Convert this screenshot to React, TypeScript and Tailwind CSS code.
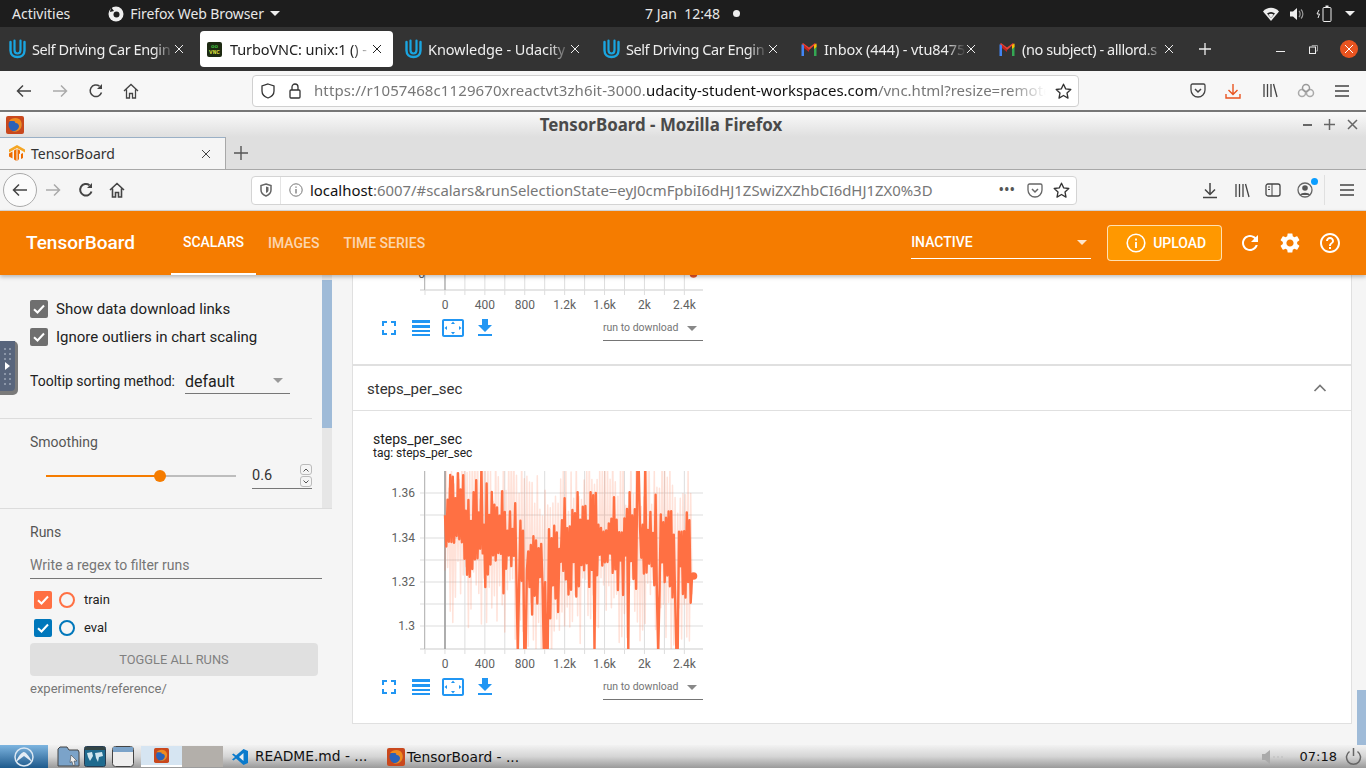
import React from 'react';

const UBUNTU = "font-['Noto_Sans','Liberation_Sans',sans-serif]";

function UdacityIcon() {
  return (
    <svg width="17" height="20" viewBox="0 0 17 20" className="shrink-0">
      <path d="M1.5 3v8.5c0 4 3 6.5 7 6.5s7-2.5 7-6.5V3" fill="none" stroke="#1aa5e0" strokeWidth="2.4" strokeLinecap="round" />
      <path d="M5.5 1.5v9.5c0 2 1.2 3.5 3 3.5s3-1.5 3-3.5V1.5" fill="none" stroke="#1aa5e0" strokeWidth="2.2" strokeLinecap="round" />
    </svg>
  );
}

function GmailIcon() {
  return (
    <svg width="16" height="13" viewBox="0 0 16 13" className="shrink-0">
      <path d="M0.5 13V1.5L3 1v12z" fill="#4285f4" />
      <path d="M13 13V1l2.5.5V13z" fill="#34a853" />
      <path d="M1 1l7 6 7-6-1-1-6 4.5L2 0z" fill="#ea4335" />
      <path d="M13 2l2.5-1.5V4L13 6z" fill="#fbbc04" />
      <path d="M3 2L8 6.5V9L3 5z" fill="#c5221f" />
    </svg>
  );
}

function VncIcon() {
  return (
    <div className="w-[15px] h-[15px] shrink-0 bg-[#1d2a12] rounded-[2px] flex flex-col justify-end pb-[1px] font-['Liberation_Mono',monospace] font-bold text-[6px] leading-[6px] text-center text-[#d8df3a]">
      <span className="text-[#3fbf3f]">oo</span>
      <span>VNC</span>
    </div>
  );
}

function FirefoxIcon({ size = 18 }: { size?: number }) {
  return (
    <svg width={size} height={size} viewBox="0 0 18 18" className="shrink-0">
      <rect x="0" y="0" width="18" height="18" rx="2" fill="#c9481d" />
      <circle cx="9" cy="9" r="6.5" fill="#2a62b8" />
      <path d="M3 5c2-3 7-4 10-2 3 2 3.5 6 2 9-2 3.5-6 4.5-9 3 4 .5 7-2 7-5 0-2-2-3.5-4-3 1-1 0-2-2-2-1.500 0-3 .2-4 0z" fill="#f08a1d" />
    </svg>
  );
}

function TabClose({ className = '' }: { className?: string }) {
  return (
    <svg width="10" height="10" viewBox="0 0 10 10" className={`shrink-0 ${className}`}>
      <path d="M1 1l8 8M9 1l-8 8" stroke="currentColor" strokeWidth="1" />
    </svg>
  );
}

function OuterTab({ icon, title, active, tight }: { icon: React.ReactNode; title: string; active?: boolean; tight?: boolean }) {
  return (
    <div className={`w-[193px] h-[36px] mr-[5px] shrink-0 rounded-[4px] flex items-center pl-[7px] pr-[11px] ${active ? 'bg-white text-[#222]' : 'text-[#eee]'}`}>
      <div className="w-[23px] shrink-0">{icon}</div>
      <span className={`w-[142px] pt-[1px] whitespace-nowrap text-[14.5px] [mask-image:linear-gradient(to_right,black_86%,transparent)] ${tight ? 'tracking-[-0.42px]' : 'tracking-[-0.1px]'}`}>{title}</span>
      <div className="ml-auto"><TabClose /></div>
    </div>
  );
}

function TopBar() {
  return (
    <div className="h-[27px] bg-[#1d1d1d] text-[#e8e8e8] text-[14px] flex items-center relative">
      <span className="ml-[12px]">Activities</span>
      <svg width="16" height="16" viewBox="0 0 16 16" className="ml-[38px]">
        <circle cx="8" cy="8" r="7.500" fill="#eee" />
        <circle cx="8.500" cy="8.500" r="3" fill="#1d1d1d" />
        <path d="M3 1l3 4-4 1z" fill="#1d1d1d" />
      </svg>
      <span className="ml-[6px] tracking-[-0.1px]">Firefox Web Browser</span>
      <span className="ml-[6px] w-0 h-0 border-x-[5px] border-x-transparent border-t-[5px] border-t-[#eee]" />
      <div className="absolute left-[645px] top-0 h-[27px] flex items-center">
        <span>7 Jan&nbsp; 12:48</span>
        <span className="ml-[13px] w-[7px] h-[7px] rounded-full bg-[#eee]" />
      </div>
      <div className="ml-auto mr-[11px] flex items-center">
        <svg width="16" height="14" viewBox="0 0 16 14"><path d="M0 4.500C4-.5 12-.5 16 4.500L8 14z" fill="#eee" /><path d="M4 6.500c2.500-2 5.500-2 8 0L8 11z" fill="#1d1d1d" /><path d="M5.500 7.500c1.500-1 3.500-1 5 0L8 11z" fill="#eee" /></svg>
        <svg width="14" height="14" viewBox="0 0 14 14" className="ml-[11px]"><path d="M0 4.500h3L7 1v12L3 9.500H0z" fill="#eee" /><path d="M9 4c1.500 1.500 1.500 4.500 0 6M11 2.500c2.500 2.500 2.500 6.500 0 9" fill="none" stroke="#999" strokeWidth="1.200" /></svg>
        <svg width="16" height="17" viewBox="0 0 16 17" className="ml-[12px]"><rect x="7" y="2.500" width="8" height="14" rx="1" fill="none" stroke="#eee" /><rect x="9.500" y="0.500" width="3" height="2" fill="#eee" /><path d="M3 5L1 9h2.500L2 13" fill="none" stroke="#eee" /></svg>
        <span className="ml-[13px] w-0 h-0 border-x-[5px] border-x-transparent border-t-[5px] border-t-[#eee]" />
      </div>
    </div>
  );
}

function OuterTabs() {
  return (
    <div className="h-[44px] bg-[#333333] flex items-start pt-[4px] pl-[2px]">
      <OuterTab icon={<UdacityIcon />} title="Self Driving Car Engin" tight />
      <OuterTab icon={<VncIcon />} title="TurboVNC: unix:1 () -" active />
      <OuterTab icon={<UdacityIcon />} title="Knowledge - Udacity" />
      <OuterTab icon={<UdacityIcon />} title="Self Driving Car Engin" tight />
      <OuterTab icon={<GmailIcon />} title="Inbox (444) - vtu8475" />
      <OuterTab icon={<GmailIcon />} title="(no subject) - alllord.s" tight />
      <svg width="14" height="14" viewBox="0 0 14 14" className="ml-[8px] mt-[11px]"><path d="M7 1v12M1 7h12" stroke="#eee" strokeWidth="1.300" /></svg>
      <div className="ml-auto flex items-center h-[36px] mr-[8px]">
        <span className="w-[9px] h-[1.500px] bg-[#eee] mt-[5px]" />
        <svg width="9" height="9" viewBox="0 0 9 9" className="ml-[24px]"><rect x="0.500" y="2" width="6" height="6.500" fill="none" stroke="#eee" /><path d="M3 2V.500h5.500V6H7" fill="none" stroke="#999" /></svg>
        <div className="ml-[22px] w-[18px] h-[18px] rounded-full bg-[#e95420] flex items-center justify-center text-white"><TabClose /></div>
      </div>
    </div>
  );
}

function ArrowIcon({ color, left }: { color: string; left?: boolean }) {
  return (
    <svg width="16" height="14" viewBox="0 0 16 14">
      <path d={left ? 'M15 7H1.500M7 1.500L1.500 7 7 12.500' : 'M1 7h13.500M9 1.500L14.500 7 9 12.500'} fill="none" stroke={color} strokeWidth="1.500" />
    </svg>
  );
}

function ReloadIcon({ color = '#444', width = 1.5 }: { color?: string; width?: number }) {
  return (
    <svg width="16" height="16" viewBox="0 0 16 16">
      <path d="M13.500 9.500A5.800 5.800 0 1 1 11.500 3.200" fill="none" stroke={color} strokeWidth={width} />
      <path d="M14 1v5h-5z" fill={color} />
    </svg>
  );
}

function HomeIcon({ width = 1.3 }: { width?: number }) {
  return (
    <svg width="16" height="16" viewBox="0 0 16 16">
      <path d="M1 8l7-6.500L15 8M3.500 6.500V15h3v-4.500h3V15h3V6.500" fill="none" stroke="#444" strokeWidth={width} />
    </svg>
  );
}

function StarIcon() {
  return (
    <svg width="17" height="16" viewBox="0 0 17 16">
      <path d="M8.500 1.200l2.200 4.700 5.100.6-3.800 3.500 1 5.100-4.500-2.600L4 15.100l1-5.100-3.800-3.500 5.100-.6z" fill="none" stroke="#333" strokeWidth="1.300" strokeLinejoin="round" />
    </svg>
  );
}

function PocketIcon({ color = '#444' }: { color?: string }) {
  return (
    <svg width="16" height="15" viewBox="0 0 16 15">
      <path d="M1 2.500a1.500 1.500 0 0 1 1.500-1.500h11A1.500 1.500 0 0 1 15 2.500V7a7 7 0 0 1-14 0z" fill="none" stroke={color} strokeWidth="1.300" />
      <path d="M5 6l3 3 3-3" fill="none" stroke={color} strokeWidth="1.500" />
    </svg>
  );
}

function LibraryIcon() {
  return (
    <svg width="16" height="15" viewBox="0 0 16 15">
      <path d="M2 1v13M5.500 1v13M9 1v13M11.500 1l3.500 13" fill="none" stroke="#444" strokeWidth="1.300" />
    </svg>
  );
}

function MenuIcon() {
  return (
    <svg width="14" height="12" viewBox="0 0 14 12">
      <path d="M0 1h14M0 6h14M0 11h14" stroke="#444" strokeWidth="1.400" />
    </svg>
  );
}

function OuterNav() {
  return (
    <div className="h-[39px] bg-[#f7f7f7] flex items-center relative">
      <div className="ml-[16px]"><ArrowIcon color="#444" left /></div>
      <div className="ml-[20px]"><ArrowIcon color="#aaa" /></div>
      <div className="ml-[20px]"><ReloadIcon /></div>
      <div className="ml-[19px]"><HomeIcon /></div>
      <div className="ml-[113px] w-[827px] h-[32px] bg-white border border-[#d0d0d0] rounded-[4px] flex items-center">
        <svg width="14" height="16" viewBox="0 0 14 16" className="ml-[8px]"><path d="M7 1l6 2v5c0 3.500-3 6-6 7-3-1-6-3.500-6-7V3z" fill="none" stroke="#333" strokeWidth="1.300" /></svg>
        <svg width="12" height="16" viewBox="0 0 12 16" className="ml-[14px]"><rect x="1" y="7" width="10" height="8" rx="1" fill="none" stroke="#333" strokeWidth="1.300" /><path d="M3 7V4a3 3 0 0 1 6 0v3" fill="none" stroke="#333" strokeWidth="1.300" /></svg>
        <div className="ml-[13px] w-[732px] whitespace-nowrap text-[15px] [mask-image:linear-gradient(to_right,black_95%,transparent)]">
          <span className="text-[#777] tracking-[0.1px]">https://r1057468c1129670xreactvt3zh6it-3000.</span>
          <span className="text-[#111]">udacity-student-workspaces.com</span>
          <span className="text-[#777]">/vnc.html?resize=remote</span>
        </div>
        <div className="ml-[9px]"><StarIcon /></div>
      </div>
      <div className="ml-[111px]"><PocketIcon /></div>
      <svg width="16" height="16" viewBox="0 0 16 16" className="ml-[19px]"><path d="M8 1v10M3.500 7L8 11.500 12.500 7M1 11v4h14v-4" fill="none" stroke="#e95420" strokeWidth="1.400" /></svg>
      <div className="ml-[21px]"><LibraryIcon /></div>
      <svg width="18" height="16" viewBox="0 0 18 16" className="ml-[19px]"><circle cx="5" cy="10" r="3.500" fill="none" stroke="#aaa" strokeWidth="1.500" /><circle cx="13" cy="10" r="3.500" fill="none" stroke="#aaa" strokeWidth="1.500" /><circle cx="9" cy="5" r="3.500" fill="none" stroke="#999" strokeWidth="1.500" /></svg>
      <div className="ml-[20px]"><MenuIcon /></div>
    </div>
  );
}

function VncTitle() {
  return (
    <div className="h-[27px] border-t-2 border-[#777] bg-gradient-to-b from-[#fafafa] to-[#dfdfdf] relative flex items-center justify-center">
      <div className="absolute left-[6px] top-[4px]"><FirefoxIcon /></div>
      <span className="font-bold text-[16.900px] text-[#4a4a4a] ml-[-44px]">TensorBoard - Mozilla Firefox</span>
      <div className="absolute right-[8px] top-0 h-full flex items-center gap-[12px] text-[#555]">
        <span className="w-[9px] h-[2px] bg-[#666]" />
        <svg width="11" height="11" viewBox="0 0 11 11"><path d="M5.500 0v11M0 5.500h11" stroke="#666" strokeWidth="1.500" /></svg>
        <svg width="11" height="11" viewBox="0 0 11 11"><path d="M1 1l9 9M10 1l-9 9" stroke="#666" strokeWidth="1.500" /></svg>
      </div>
    </div>
  );
}

function InnerTabs() {
  return (
    <div className="h-[33px] bg-[#dfdfdf] border-b border-[#a8a8a8] flex items-end">
      <div className="w-[226px] h-[33px] bg-[#f5f5f5] border-t-2 border-t-[#9ab0c6] border-r border-r-[#a8a8a8] flex items-center pl-[9px] pr-[14px]">
        <svg width="16" height="17" viewBox="0 0 16 17">
          <path d="M8 0l8 4.500v3L8 3 0 7.500v-3z" fill="#f5a623" />
          <path d="M0 8.500l3.500-2v7L0 11.500zM5 5.500l2.500-1.500v12L5 14.500zM8.500 4l2.500 1.500v3l-1 .5v5L8.500 16zM12 9l2-1v5l-2 1z" fill="#ef6c00" />
        </svg>
        <span className="ml-[6px] text-[14px] text-[#333]">TensorBoard</span>
        <div className="ml-auto text-[#444]"><TabClose /></div>
      </div>
      <svg width="14" height="14" viewBox="0 0 14 14" className="ml-[8px] mb-[9px]"><path d="M7 0v14M0 7h14" stroke="#555" strokeWidth="1.400" /></svg>
    </div>
  );
}

function InnerNav() {
  return (
    <div className="h-[41px] bg-[#f5f5f5] border-b border-[#d8d8d8] flex items-center">
      <div className="ml-[3px] w-[34px] h-[34px] rounded-full border border-[#aaa] bg-[#fbfbfb] flex items-center justify-center"><ArrowIcon color="#444" left /></div>
      <div className="ml-[8px]"><ArrowIcon color="#aaa" /></div>
      <div className="ml-[17px]"><ReloadIcon width={2} /></div>
      <div className="ml-[15px]"><HomeIcon width={1.600} /></div>
      <div className="ml-[126px] w-[826px] h-[29px] bg-white border border-[#d4d4d4] rounded-[4px] flex items-center">
        <svg width="12" height="14" viewBox="0 0 12 14" className="ml-[8px] shrink-0"><path d="M6 1l5 1.500V7c0 3-2.500 5-5 6-2.500-1-5-3-5-6V2.500z" fill="none" stroke="#666" strokeWidth="1.500" /><path d="M6 3.500l2.500.8V7c0 1.500-1.200 2.500-2.500 3z" fill="#666" /></svg>
        <span className="ml-[8px] w-px h-[27px] bg-[#e4e4e4] shrink-0" />
        <svg width="14" height="14" viewBox="0 0 14 14" className="ml-[8px] shrink-0"><circle cx="7" cy="7" r="6.200" fill="none" stroke="#777" /><path d="M7 6v4.500M7 3.500v1.300" stroke="#777" strokeWidth="1.300" /></svg>
        <div className="ml-[7px] w-[672px] whitespace-nowrap text-[14.900px]">
          <span className="text-[#111]">localhost</span>
          <span className="text-[#777]">:6007/#scalars&amp;runSelectionState=eyJ0cmFpbiI6dHJ1ZSwiZXZhbCI6dHJ1ZX0%3D</span>
        </div>
        <span className="ml-[17px] text-[#555] font-bold text-[12px] tracking-[1px] leading-[8px]">•••</span>
        <div className="ml-[11px]"><PocketIcon color="#666" /></div>
        <div className="ml-[10px]"><StarIcon /></div>
      </div>
      <svg width="16" height="17" viewBox="0 0 16 17" className="ml-[125px]"><path d="M8 1v11M3 7.500L8 12.500 13 7.500M1 15.500h14" fill="none" stroke="#444" strokeWidth="1.500" /></svg>
      <div className="ml-[16px]"><LibraryIcon /></div>
      <svg width="16" height="14" viewBox="0 0 16 14" className="ml-[15px]"><rect x="1" y="1" width="14" height="12" rx="2" fill="none" stroke="#444" strokeWidth="1.300" /><path d="M7 1v12M3 4h2M3 6.500h2" stroke="#444" /></svg>
      <div className="ml-[16px] relative">
        <svg width="16" height="16" viewBox="0 0 16 16"><circle cx="8" cy="8" r="7" fill="none" stroke="#666" strokeWidth="1.300" /><circle cx="8" cy="6" r="2.800" fill="#555" /><path d="M3 13c1-3 9-3 10 0z" fill="#555" /></svg>
        <span className="absolute top-[-4px] right-[-5px] w-[7px] h-[7px] rounded-full bg-[#0a9dff]" />
      </div>
      <span className="ml-[11px] w-px h-[30px] bg-[#e0e0e0]" />
      <div className="ml-[15px]"><MenuIcon /></div>
    </div>
  );
}

function TbHeader() {
  return (
    <div className="h-[64px] bg-[#f57c00] text-white flex items-center relative z-10 shadow-[0_2px_4px_rgba(0,0,0,0.25)] font-['Roboto',sans-serif]">
      <span className="ml-[26px] text-[19px] font-medium">TensorBoard</span>
      <div className="ml-[36px] h-full flex text-[14px] font-medium">
        <div className="w-[85px] h-full border-b-2 border-white flex items-center justify-center pt-[1px]">SCALARS</div>
        <div className="ml-[12px] flex items-center text-white/70">IMAGES</div>
        <div className="ml-[24px] flex items-center text-white/70">TIME SERIES</div>
      </div>
      <div className="ml-[486px] w-[180px] h-[32px] border-b border-white flex items-center justify-between pr-[4px] text-[14px] font-medium">
        <span>INACTIVE</span>
        <span className="w-0 h-0 border-x-[5px] border-x-transparent border-t-[5px] border-t-white/80" />
      </div>
      <div className="ml-[16px] w-[115px] h-[36px] bg-[#ff9800] border border-white/70 rounded-[4px] flex items-center pl-[18px] text-[14px] font-medium">
        <svg width="20" height="20" viewBox="0 0 20 20"><circle cx="10" cy="10" r="8.800" fill="none" stroke="white" strokeWidth="1.600" /><path d="M10 9v6M10 5.500v2" stroke="white" strokeWidth="1.800" /></svg>
        <span className="ml-[7px]">UPLOAD</span>
      </div>
      <svg width="24" height="24" viewBox="0 0 24 24" fill="white" className="ml-[16px]"><path d="M17.650 6.350C16.200 4.900 14.210 4 12 4c-4.420 0-7.990 3.580-7.990 8s3.570 8 7.990 8c3.730 0 6.840-2.550 7.730-6h-2.080c-.82 2.330-3.040 4-5.650 4-3.310 0-6-2.690-6-6s2.690-6 6-6c1.660 0 3.140.69 4.220 1.780L13 11h7V4l-2.350 2.350z" /></svg>
      <svg width="24" height="24" viewBox="0 0 24 24" fill="white" className="ml-[16px]"><path d="M19.140 12.940c.04-.3.060-.61.060-.94 0-.32-.02-.64-.07-.94l2.030-1.580c.18-.14.230-.41.120-.61l-1.920-3.320c-.12-.22-.37-.29-.59-.22l-2.390.96c-.5-.38-1.030-.7-1.620-.94l-.36-2.540c-.04-.24-.24-.41-.48-.41h-3.840c-.24 0-.43.170-.47.410l-.36 2.540c-.59.24-1.130.57-1.620.94l-2.390-.96c-.22-.08-.47 0-.59.22L2.740 8.870c-.12.21-.08.47.12.61l2.030 1.580c-.05.3-.09.63-.09.94s.02.64.07.94l-2.030 1.580c-.18.14-.23.41-.12.61l1.920 3.320c.12.22.37.29.59.22l2.390-.96c.5.38 1.030.7 1.620.94l.36 2.540c.05.24.24.41.48.41h3.840c.24 0 .44-.17.47-.41l.36-2.540c.59-.24 1.130-.56 1.620-.94l2.390.96c.22.08.47 0 .59-.22l1.920-3.320c.12-.22.07-.47-.12-.61l-2.010-1.580zM12 15.600c-1.980 0-3.600-1.620-3.600-3.600s1.620-3.600 3.600-3.600 3.600 1.620 3.600 3.600-1.620 3.600-3.600 3.600z" /></svg>
      <svg width="24" height="24" viewBox="0 0 24 24" fill="white" className="ml-[16px]"><path d="M11 18h2v-2h-2v2zm1-16C6.480 2 2 6.480 2 12s4.480 10 10 10 10-4.480 10-10S17.520 2 12 2zm0 18c-4.410 0-8-3.590-8-8s3.590-8 8-8 8 3.590 8 8-3.590 8-8 8zm0-14c-2.210 0-4 1.790-4 4h2c0-1.100.9-2 2-2s2 .9 2 2c0 2-3 1.750-3 5h2c0-2.250 3-2.500 3-5 0-2.210-1.790-4-4-4z" /></svg>
    </div>
  );
}

function CheckRow({ label, color, ring }: { label: string; color: string; ring?: boolean }) {
  return (
    <div className="flex items-center h-[28px]">
      <svg width="18" height="18" viewBox="0 0 18 18" className="shrink-0">
        <rect width="18" height="18" rx="2" fill={color} />
        <path d="M4 9.200l3.500 3.300L14 5.500" fill="none" stroke="white" strokeWidth="2" />
      </svg>
      {ring && <span className="ml-[7px] w-[16px] h-[16px] rounded-full border-2" style={{ borderColor: color }} />}
      <span className={ring ? 'ml-[9px] text-[13px] text-[#222]' : 'ml-[8px] text-[15px] text-[#212121]'}>{label}</span>
    </div>
  );
}

function Sidebar() {
  return (
    <div className="w-[332px] shrink-0 h-full bg-[#f5f5f5] flex flex-col relative">
      <div className="h-[234px] flex border-b border-[#dcdcdc]">
        <div className="w-[322px]">
          <div className="h-[144px] mr-[10px] border-b border-[#dcdcdc] pl-[30px] pt-[20px]">
            <CheckRow label="Show data download links" color="#6f6f6f" />
            <CheckRow label="Ignore outliers in chart scaling" color="#6f6f6f" />
            <div className="flex items-start mt-[17px]">
              <span className="text-[14px] leading-[26px] text-[#212121]">Tooltip sorting method:</span>
              <div className="ml-[10px] w-[105px] h-[26px] border-b border-[#777] flex items-center justify-between pr-[7px]">
                <span className="text-[16px] text-[#212121] pt-[2px]">default</span>
                <span className="w-0 h-0 border-x-[5px] border-x-transparent border-t-[5px] border-t-[#999]" />
              </div>
            </div>
          </div>
          <div className="pl-[30px] pt-[14px]">
            <div className="text-[14px] leading-[18px] text-[#555]">Smoothing</div>
            <div className="flex items-center mt-[12px]">
              <div className="ml-[16px] w-[190px] h-[2px] bg-[#bdbdbd] relative">
                <div className="h-full w-[114px] bg-[#f57c00]" />
                <span className="absolute left-[108px] top-[-5px] w-[12px] h-[12px] rounded-full bg-[#f57c00]" />
              </div>
              <div className="ml-[16px] w-[60px] h-[26px] border-b border-[#777] flex items-center justify-between text-[14.500px] text-[#333]">
                <span>0.6</span>
                <div className="flex flex-col gap-[1px]">
                  <span className="w-[12px] h-[11px] border border-[#bbb] rounded-[3px] flex items-center justify-center"><svg width="6" height="4" viewBox="0 0 6 4"><path d="M.5 3.500L3 1l2.500 2.500" fill="none" stroke="#555" /></svg></span>
                  <span className="w-[12px] h-[11px] border border-[#bbb] rounded-[3px] flex items-center justify-center"><svg width="6" height="4" viewBox="0 0 6 4"><path d="M.5.500L3 3l2.500-2.500" fill="none" stroke="#555" /></svg></span>
                </div>
              </div>
            </div>
          </div>
        </div>
        <div className="w-[10px] bg-[#e6e6e6] pt-[5px]">
          <div className="h-[148px] bg-[#9fbbd8]" />
        </div>
      </div>
      <div className="pl-[30px] pt-[14px] flex-1">
        <div className="text-[14px] leading-[18px] text-[#555]">Runs</div>
        <div className="mt-[9px] w-[292px] h-[29px] pt-[3px] border-b border-[#777] flex items-center text-[14px] text-[#757575]">Write a regex to filter runs</div>
        <div className="mt-[7px] pl-[4px]">
          <CheckRow label="train" color="#ff7043" ring />
          <CheckRow label="eval" color="#0077bb" ring />
        </div>
        <div className="mt-[1px] w-[288px] h-[33px] rounded-[4px] bg-[#e0e0e0] flex items-center justify-center text-[12.800px] text-[#808080]">TOGGLE ALL RUNS</div>
        <div className="mt-[4px] text-[13px] leading-[18px] text-[#777]">experiments/reference/</div>
      </div>
      <div className="absolute left-0 top-[66px] w-[18px] h-[54px] bg-[#7a7a7a] rounded-r-[5px]">
        <div className="w-[15px] h-[50px] bg-[#58657c] rounded-br-[4px]">
          <svg width="15" height="50" viewBox="0 0 15 50">
            <g fill="#8b96a8">
              {[7, 12, 17, 32, 37, 42].map(y => (
                <g key={y}>
                  <rect x="4" y={y} width="2" height="2" />
                  <rect x="9" y={y} width="2" height="2" />
                </g>
              ))}
            </g>
            <path d="M5 21l5 4-5 4z" fill="white" />
          </svg>
        </div>
      </div>
    </div>
  );
}

const STEP = 1.3;

// rough copy of the noisy steps_per_sec series, pixel x is 445..692
function makeSeries() {
  let seed = 2024;
  const rnd = () => {
    seed = (seed * 16807) % 2147483647;
    return seed / 2147483647;
  };
  const low = [518, 525, 544, 547, 594, 628, 637, 658, 677];
  const high = [482, 638, 645];
  const smooth: number[] = [];
  const raw: number[] = [];
  for (let x = 445; x <= 692; x += STEP) {
    const t = (x - 445) / 249;
    const mean = 1.347 - 0.012 * Math.min(t * 3, 1) - (t > 0.33 && t < 0.46 ? 0.008 : 0) + (t > 0.5 ? 0.002 : 0) - (t > 0.88 ? 0.006 : 0);
    const even = smooth.length % 2 === 0;
    let s = mean + (even ? 1 : -1) * (0.004 + rnd() * 0.02);
    if (low.some(p => Math.abs(p - x) < 0.7)) s = 1.288;
    if (high.some(p => Math.abs(p - x) < 0.7)) s = 1.372;
    smooth.push(s);
    raw.push(mean + (even ? -1 : 1) * (0.015 + rnd() * 0.03));
  }
  smooth[0] = 1.35;
  smooth[smooth.length - 1] = 1.322;
  return { smooth, raw };
}

function toPath(values: number[]) {
  return values
    .map((v, i) => {
      const px = 80 + i * STEP;
      const py = 28 + ((1.36 - v) / 0.01) * 22.2;
      return `${i === 0 ? 'M' : 'L'}${px.toFixed(1)} ${py.toFixed(1)}`;
    })
    .join(' ');
}

const series = makeSeries();
const XLABELS = ['0', '400', '800', '1.2k', '1.6k', '2k', '2.4k'];
const YLABELS: [string, number][] = [['1.36', 32], ['1.34', 77], ['1.32', 121], ['1.3', 165]];

// svg x is page x - 365, y is page y - 465
function Chart({ full }: { full?: boolean }) {
  const grid: number[] = [];
  for (let x = 60; x <= 338; x += 19.95) grid.push(x);
  return (
    <svg width="340" height={full ? 207 : 38} viewBox={full ? '0 0 340 207' : '0 169 340 38'} className="block">
      <defs>
        <clipPath id="plot"><rect x="59" y="6" width="280" height="178" /></clipPath>
      </defs>
      {grid.map(x => <path key={x} d={`M${x} 6V189`} stroke="#ddd" />)}
      {[28, 50, 73, 95, 117, 139, 161].map(y => full && <path key={y} d={`M55 ${y}H338`} stroke="#ddd" />)}
      <path d="M55 184H338" stroke="#ddd" strokeWidth="1.500" />
      <path d="M59.500 6V184" stroke="#bbb" />
      <path d="M80 6V184" stroke="#999" strokeWidth={full ? 1.500 : 1} />
      {full && (
        <g clipPath="url(#plot)" fill="none" strokeLinejoin="round">
          <path d={toPath(series.raw)} stroke="#ff7043" strokeOpacity="0.2" strokeWidth="1.500" />
          <path d={toPath(series.smooth)} stroke="#ff7043" strokeWidth="2.400" />
        </g>
      )}
      {full ? <circle cx="328.500" cy="111" r="3.800" fill="#ff7043" /> : <circle cx="328.500" cy="168" r="3.800" fill="#e8552b" />}
      <g fill="#616161" fontFamily="Roboto, sans-serif" fontSize="12" textAnchor="middle">
        {XLABELS.map((l, i) => <text key={l} x={80 + i * 39.9} y="203">{l}</text>)}
      </g>
      {full ? (
        <g fill="#616161" fontFamily="Roboto, sans-serif" fontSize="12" textAnchor="end">
          {YLABELS.map(([l, y]) => <text key={l} x="50" y={y}>{l}</text>)}
        </g>
      ) : (
        <text x="60" y="172" fill="#616161" fontFamily="Roboto, sans-serif" fontSize="12" textAnchor="end">0</text>
      )}
    </svg>
  );
}

function ChartTools() {
  return (
    <div className="flex items-center h-[30px] ml-[12px]">
      <svg width="24" height="24" viewBox="0 0 24 24" fill="#2196f3"><path d="M7 14H5v5h5v-2H7v-3zm-2-4h2V7h3V5H5v5zm12 7h-3v2h5v-5h-2v3zM14 5v2h3v3h2V5h-5z" /></svg>
      <svg width="24" height="24" viewBox="0 0 24 24" fill="#2196f3" className="ml-[8px]"><path d="M3 4h18v3H3zM3 9h18v3H3zM3 14h18v2H3zM3 18h18v2H3z" /></svg>
      <svg width="24" height="24" viewBox="0 0 24 24" fill="#2196f3" className="ml-[8px]"><path d="M12.010 5.500L10 8h4l-1.990-2.500zM18 10v4l2.500-1.990L18 10zM6 10l-2.500 2.010L6 14v-4zm8 6h-4l2.010 2.500L14 16zm7-13H3c-1.100 0-2 .9-2 2v14c0 1.100.9 2 2 2h18c1.100 0 2-.9 2-2V5c0-1.100-.9-2-2-2zm0 16.010H3V4.990h18v14.020z" /></svg>
      <svg width="24" height="24" viewBox="0 0 24 24" fill="#2196f3" className="ml-[8px]"><path d="M19 9h-4V3H9v6H5l7 7 7-7zM5 18v2h14v-2H5z" /></svg>
      <div className="ml-[106px] w-[100px] h-[26px] border-b border-[#757575] flex items-center justify-between pr-[6px] pt-[1px]">
        <span className="text-[10.500px] text-[#757575]">run to download</span>
        <span className="w-0 h-0 border-x-[5px] border-x-transparent border-t-[5px] border-t-[#888]" />
      </div>
    </div>
  );
}

function MainPane() {
  return (
    <div className="flex-1 h-full bg-[#f5f5f5] flex overflow-hidden">
      <div className="w-[1000px] ml-[20px] shrink-0">
        <div className="h-[90px] bg-white border-x border-b border-[#e0e0e0] pl-[12px]">
          <Chart />
          <ChartTools />
        </div>
        <div className="h-[46px] bg-white border border-[#e0e0e0] flex items-center justify-between pl-[14px] pr-[24px]">
          <span className="text-[15px] text-[#333] pt-[3px]">steps_per_sec</span>
          <svg width="14" height="8" viewBox="0 0 14 8"><path d="M1.500 7L7 1.500 12.500 7" fill="none" stroke="#777" strokeWidth="1.700" /></svg>
        </div>
        <div className="h-[313px] bg-white border-x border-b border-[#e0e0e0] pl-[12px]">
          <div className="pl-[8px] pt-[20px] h-[54px] text-[#212121]">
            <div className="text-[14px] leading-[16px]">steps_per_sec</div>
            <div className="text-[12px] leading-[13px]">tag: steps_per_sec</div>
          </div>
          <Chart full />
          <ChartTools />
        </div>
      </div>
      <div className="ml-auto w-[9px] h-full bg-[#f5f5f5] flex flex-col justify-end">
        <div className="h-[55px] bg-[#9fbbd8]" />
      </div>
    </div>
  );
}

function TaskBar() {
  return (
    <div className="h-[23px] bg-gradient-to-b from-[#f2f2f2] via-[#d5d5d5] to-[#9a9a9a] flex items-center text-[13.800px] text-[#111] font-['DejaVu_Sans',sans-serif] relative">
      <div className="w-[48px] h-full bg-gradient-to-b from-[#7db5e0] to-[#1d5a8c] flex items-center justify-center">
        <svg width="22" height="20" viewBox="0 0 22 20"><circle cx="11" cy="10" r="9" fill="none" stroke="#dbe7f2" strokeWidth="1.500" /><path d="M3 15c3-8 7-10 8-10s5 3 8 10l-8-6z" fill="#e4edf5" /></svg>
      </div>
      <svg width="23" height="21" viewBox="0 0 23 21" className="ml-[9px]"><path d="M1 20V3l2-2h7l2 3h9l1 2v14z" fill="#7ba3c9" stroke="#444" /><path d="M14 9l6 6h-3l1 4-2 .5-1-4-2 1z" fill="#eee" stroke="#333" strokeWidth=".5" /></svg>
      <svg width="22" height="21" viewBox="0 0 22 21" className="ml-[4px]"><rect x=".5" y=".5" width="21" height="20" rx="2" fill="#1e6a8e" stroke="#263c52" /><rect x="1" y="1" width="20" height="3" fill="#344" /><path d="M3 7l5-1 1 4-3 5-2-4zM11 7l7-1 1 4-4 1-1 5-2-4z" fill="#cfe6ef" /></svg>
      <svg width="22" height="21" viewBox="0 0 22 21" className="ml-[6px]"><rect x=".5" y=".5" width="21" height="20" rx="3" fill="#eee" stroke="#444" /><rect x="1" y="1" width="20" height="5" fill="#7ba3c9" /></svg>
      <div className="ml-[7px] w-[41px] h-[21px] bg-[#d6e5f2] border-b-2 border-white flex items-center justify-center"><FirefoxIcon size={15} /></div>
      <div className="w-[41px] h-[21px] bg-[#b3afaa]" />
      <svg width="16" height="16" viewBox="0 0 16 16" className="ml-[9px]"><path d="M11.500 0L16 2v12l-4.500 2L4 9.500 1.500 11.500 0 10.500 3 8 0 5.500 1.500 4.500 4 6.500z" fill="#0a7acc" /><path d="M11.500 4L7 8l4.500 4z" fill="#e8eef2" /></svg>
      <span className="ml-[7px]">README.md - ...</span>
      <div className="absolute left-[387px] top-[2px] flex items-center">
        <FirefoxIcon />
        <span className="ml-[2px]">TensorBoard - ...</span>
      </div>
      <div className="ml-auto flex items-center mr-[4px]">
        <svg width="22" height="14" viewBox="0 0 22 14"><path d="M0 4h3l5-4v14l-5-4H0z" fill="#aaa" /><path d="M11 7h2M15 7h2M19 7h2" stroke="#bbb" /></svg>
        <span className="ml-[16px] text-[13px] text-[#111] font-medium">07:18</span>
        <svg width="17" height="19" viewBox="0 0 17 19" className="ml-[8px]"><path d="M8.500 1v8" stroke="#666" strokeWidth="1.500" /><path d="M4.500 4.500a7 7 0 1 0 8 0" fill="none" stroke="#666" strokeWidth="1.500" /></svg>
      </div>
    </div>
  );
}

export default function App() {
  return (
    <div className={`w-[1366px] h-[768px] overflow-hidden flex flex-col bg-white ${UBUNTU}`}>
      <TopBar />
      <OuterTabs />
      <OuterNav />
      <VncTitle />
      <InnerTabs />
      <InnerNav />
      <TbHeader />
      <div className="h-[470px] flex overflow-hidden font-['Roboto',sans-serif]">
        <Sidebar />
        <MainPane />
      </div>
      <TaskBar />
    </div>
  );
}
